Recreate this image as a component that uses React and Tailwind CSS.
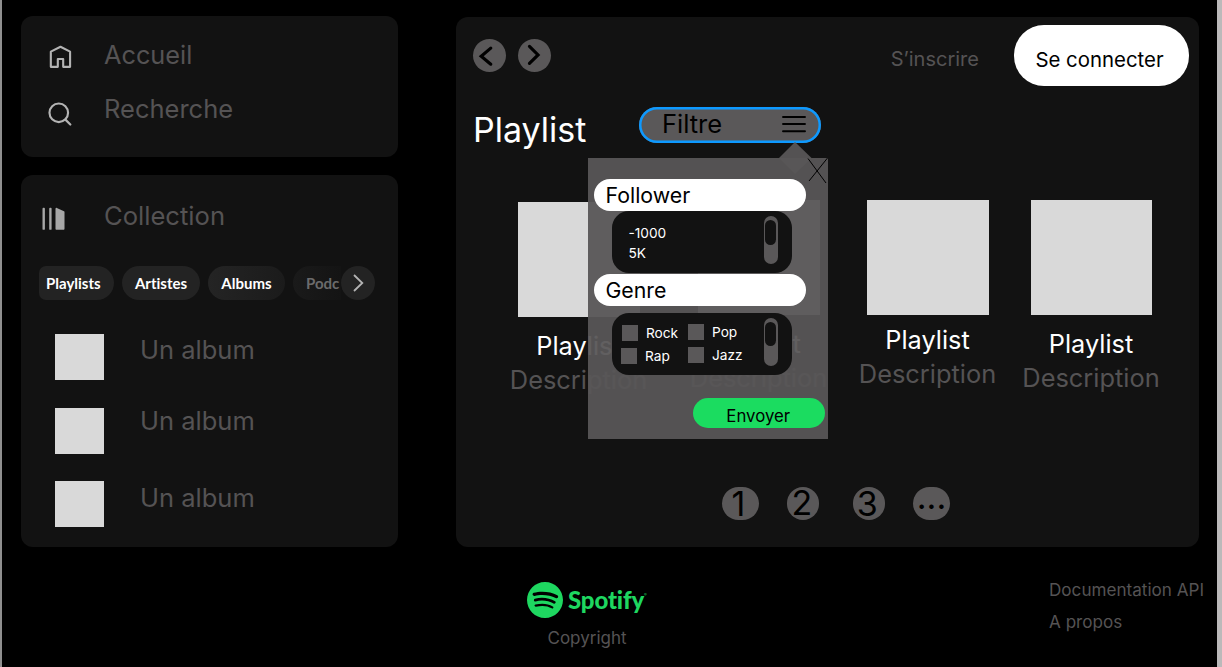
import React from "react";
import { SiSpotify } from "react-icons/si";

const ink = "text-[#555354]";

function HomeIcon() {
  return (
    <svg className="block h-[23px] w-[23px]" viewBox="0 0 24 24" fill="none" stroke="#b3b3b3" strokeWidth="2.200" strokeLinejoin="round">
      <path d="M1.900 6.900 12 1.800 22 6.900V22.800H14.800V14.600H9.200V22.800H1.900Z" />
    </svg>
  );
}

function SearchIcon() {
  return (
    <svg className="block h-[23.500px] w-[23.500px]" viewBox="0 0 24 24" fill="none" stroke="#b3b3b3" strokeWidth="2.200" strokeLinecap="round">
      <circle cx="11" cy="11" r="9.500" />
      <path d="m17.800 18 5 5" />
    </svg>
  );
}

function LibraryIcon() {
  return (
    <svg className="block h-6 w-6" viewBox="0 0 24 24" fill="#a7a7a7">
      <rect x=".5" y=".8" width="2.400" height="22" rx=".9" />
      <rect x="7.200" y=".8" width="2.400" height="22" rx=".9" />
      <path d="M13.500 1.700c0-.7.7-1.100 1.300-.8l7.200 3.300c.3.200.500.500.500.900V21.800c0 .600-.400 1-1 1H14.500c-.600 0-1-.400-1-1Z" />
    </svg>
  );
}

function Chevron({ flip }) {
  return (
    <span className="flex h-[32.600px] w-[32.600px] items-center justify-center rounded-full bg-[#5a5859]">
      <svg className="block h-[33px] w-[33px]" viewBox="0 0 33 33" fill="none" stroke="#000" strokeWidth="3.200" strokeLinecap="round">
        {flip ? <path d="m11.600 7.200 8.700 8.700-8.700 8.600" /> : <path d="m18 9-9.700 8.200L18 25.300" />}
      </svg>
    </span>
  );
}

function Album({ cover, label }) {
  return (
    <div className="flex h-[73.500px] items-start">
      <div className={`w-[49px] bg-[#d9d9d9] ${cover}`} />
      <span className={`ml-[36px] text-[25.500px] leading-[32px] ${ink} ${label}`}>Un album</span>
    </div>
  );
}

function Card({ offset, title }) {
  return (
    <div className={`flex w-[140px] flex-col items-center ${offset}`}>
      <div className="h-[115.500px] w-[121.500px] bg-[#d9d9d9]" />
      <span className={`pr-px text-[25.300px] leading-[30px] text-white ${title}`}>Playlist</span>
      <span className={`mt-[4.500px] pr-px text-[25.400px] leading-[30px] ${ink}`}>Description</span>
    </div>
  );
}

function Scroller() {
  return (
    <div className="mt-[5px] h-12 w-3.5 rounded-full bg-[#5a5859] pt-1 pl-px">
      <div className="h-[24.500px] w-[11.500px] rounded-full bg-[#121212]" />
    </div>
  );
}

function Check({ children, className }) {
  return (
    <label className={`flex items-center text-[13.700px] leading-4 text-white ${className}`}>
      <span className="mr-2 h-4 w-4 bg-[#5a5859]" />
      {children}
    </label>
  );
}

function FilterMenu() {
  return (
    <div className="absolute top-[140.500px] left-[131.700px] h-[281.300px] w-[240.300px] bg-[#585657]/95">
      <svg className="absolute top-[-15.500px] left-[189px] h-[42px] w-[52px]" viewBox="0 0 52 42">
        <path d="M18 0 34.500 16 18 32 2 16Z" fill="#585657" fillOpacity=".95" />
        <path d="M31 16.500 49 41M50.500 16 32 39" stroke="#000" strokeWidth="1" />
      </svg>
      <div className="relative flex flex-col pt-[21.200px] pl-[6.800px]">
        <div className="h-[32.600px] w-[211.500px] rounded-full bg-white pl-[11px] text-[21.300px] leading-[32.600px] text-black">Follower</div>
        <div className="ml-[18px] flex h-[62px] w-[179.500px] justify-between rounded-[17px] bg-[#121212] pr-[14px] pl-[16px]">
          <div className="flex flex-col pt-[11.500px] text-[13.700px] leading-5 text-white">
            <span>-1000</span>
            <span>5K</span>
          </div>
          <Scroller />
        </div>
        <div className="mt-[.5px] h-[32.600px] w-[211.500px] rounded-full bg-white pl-[11px] text-[21.300px] leading-[32.600px] text-black">Genre</div>
        <div className="mt-[6.500px] ml-[18px] flex h-[62.500px] w-[179.500px] justify-between rounded-[17px] bg-[#121212] pr-[14px] pl-[9.500px]">
          <div className="flex pt-[11px]">
            <div className="flex w-[66px] flex-col gap-[7.500px] pt-px">
              <Check>Rock</Check>
              <Check className="-ml-px">Rap</Check>
            </div>
            <div className="flex flex-col gap-[7px]">
              <Check>Pop</Check>
              <Check>Jazz</Check>
            </div>
          </div>
          <Scroller />
        </div>
        <div className="mt-[22.500px] ml-[98.500px] h-[30px] w-[132.500px] rounded-full bg-[#1bdc60] pt-[3px] pr-[2px] text-center text-[16.800px] leading-[30px] text-black">Envoyer</div>
      </div>
    </div>
  );
}

export default function App() {
  return (
    <div className="flex h-[667px] w-[1222px] flex-col overflow-hidden border-r-[5px] border-l-2 border-r-[#bbb9ba] border-l-[#8f8f8f] bg-black font-['Inter',sans-serif] whitespace-nowrap">
      <div className="flex h-[547px] pt-4 pl-[18.500px]">
        <aside className="flex w-[377px] flex-col gap-[18px]">
          <nav className="h-[141px] rounded-xl bg-[#121212] pl-[28px]">
            <div className="flex h-[55px] pt-[23px]">
              <div className="pt-[6px]"><HomeIcon /></div>
              <span className={`ml-[32.500px] text-[25.300px] leading-[32px] ${ink}`}>Accueil</span>
            </div>
            <div className="flex pt-[22px]">
              <div className="-ml-[.5px] pt-[9px]"><SearchIcon /></div>
              <span className={`ml-[32.500px] text-[25.500px] leading-[32px] ${ink}`}>Recherche</span>
            </div>
          </nav>
          <section className="h-[372px] rounded-xl bg-[#121212] pt-[25px]">
            <div className="flex pl-[21px]">
              <div className="pt-[7px]"><LibraryIcon /></div>
              <span className={`ml-[38.500px] text-[25.600px] leading-[32px] ${ink}`}>Collection</span>
            </div>
            <div className="mt-[34px] ml-[18.500px] flex h-[34px] w-[336px] gap-2 font-['Lato',sans-serif] text-[15px] leading-[34px] font-bold text-white [font-variant-ligatures:none]">
              <span className="w-[75px] rounded-l-[7px] rounded-r-[17px] bg-[#232323] pl-[7px]">Playlists</span>
              <span className="w-[78px] rounded-full bg-[#232323] text-center">Artistes</span>
              <span className="w-[77px] rounded-full bg-gradient-to-r from-[#242424] to-[#1b1b1b] text-center">Albums</span>
              <div className="flex">
                <span className="w-[48px] overflow-hidden rounded-l-full bg-gradient-to-r from-[#1a1a1a] to-[#141414] pl-[13px] text-[#6b6b6b]">Podc</span>
                <span className="h-[34px] w-[34px] rounded-full bg-[#232323]">
                  <svg className="block h-[34px] w-[34px]" viewBox="0 0 34 34" fill="none" stroke="#b3b3b3" strokeWidth="1.800">
                    <path d="m13 9 8.300 8L13 25" />
                  </svg>
                </span>
              </div>
            </div>
            <div className="flex flex-col pt-[34px] pl-[34.500px]">
              <Album cover="h-[46px]" label="mt-[0px]" />
              <Album cover="h-[46px]" label="mt-[-2.500px]" />
              <Album cover="h-[46px]" label="mt-[.5px]" />
            </div>
          </section>
        </aside>

        <main className="relative mt-px ml-[58.500px] h-[529.500px] w-[743px] rounded-xl bg-[#121212]">
          <header className="flex h-[90px] pl-[17px]">
            <div className="flex gap-[12.500px] pt-[22px]">
              <Chevron />
              <Chevron flip />
            </div>
            <span className={`ml-[340px] pt-[27px] text-[20px] leading-[30px] ${ink}`}>S’inscrire</span>
            <span className="mt-[7.500px] ml-auto mr-[10.500px] h-[61.500px] w-[175px] rounded-[30px] bg-white pt-[4.500px] pr-[3px] text-center text-[20.400px] leading-[61px] text-black">Se connecter</span>
          </header>
          <div className="flex pl-[17px]">
            <h1 className="w-[165.500px] pt-[3px] text-[34px] leading-10 text-white">Playlist</h1>
            <button className="flex h-[35.500px] w-[182px] items-center justify-between rounded-full bg-[#5a5859] pr-[14.500px] pb-px pl-[23.500px] text-[25.500px] leading-8 text-black shadow-[inset_0_0_0_2.5px_#0d99ff]">
              Filtre
              <svg className="block h-[18px] w-6" viewBox="0 0 24 18" stroke="#000" strokeWidth="1.900" strokeLinecap="round">
                <path d="M1 2h22M1 9h22M1 16.300h22" />
              </svg>
            </button>
          </div>
          <div className="flex pt-[49.500px] pl-[53px]">
            <Card offset="mt-[2px]" title="mt-[13.500px]" />
            <Card offset="ml-[40px]" title="mt-[13.500px]" />
            <Card offset="ml-[29px]" title="mt-[9.500px]" />
            <Card offset="ml-[23.500px]" title="mt-[13.500px]" />
          </div>
          <div className="absolute top-[470px] left-[265.500px] flex text-center text-[34px] leading-[34px] text-black">
            <span className="h-[33px] w-[37px] rounded-full bg-[#5a5859] pr-[3px]">1</span>
            <span className="ml-[28px] h-[33px] w-[32.500px] rounded-full bg-[#5a5859] pr-[2px] leading-[31px]">2</span>
            <span className="ml-[33.500px] h-[33px] w-[32.500px] rounded-full bg-[#5a5859] pr-[3px]">3</span>
            <span className="ml-[28px] h-[33px] w-[37px] rounded-full bg-[#5a5859] leading-[20px]">...</span>
          </div>
          <FilterMenu />
        </main>
      </div>
      <footer className={`flex h-[120px] ${ink}`}>
        <div className="ml-[525px] pt-[35px]">
          <div className="flex h-9 items-center text-[#1ed760]">
            <SiSpotify className="h-9 w-9" />
            <span className="ml-[5px] font-['Lato',sans-serif] text-[24px] leading-9 font-black tracking-[-0.150px] [font-variant-ligatures:none]">Spotify</span>
            <span className="mb-2.5 text-[4px]">®</span>
          </div>
          <p className="pt-[6.500px] pl-[20.500px] text-[17px] leading-[26px]">Copyright</p>
        </div>
        <div className="ml-auto mr-[13px] flex flex-col gap-[6px] pt-[29.500px] text-[17.100px] leading-[26px]">
          <span>Documentation API</span>
          <span>A propos</span>
        </div>
      </footer>
    </div>
  );
}
